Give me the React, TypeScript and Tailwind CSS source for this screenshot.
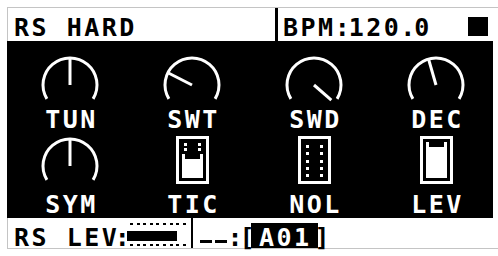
import React from 'react';

// knob: angle in degrees, 0 = straight up, positive = clockwise
const Knob = ({ angle, len = 27 }: { angle: number; len?: number }) => {
  const r = (angle * Math.PI) / 180;
  const x2 = 30 + len * Math.sin(r);
  const y2 = 30 - len * Math.cos(r);
  return (
    <svg width="60" height="48" viewBox="0 0 60 48">
      <path d="M6.9 43.9A27 27 0 1 1 53.1 43.9" fill="none" stroke="#fff" strokeWidth="3" />
      <line x1="30" y1="30" x2={x2} y2={y2} stroke="#fff" strokeWidth="3" />
    </svg>
  );
};

const Fader = ({ top, dots = [] }: { top?: number; dots?: number[] }) => (
  <svg width="33" height="48" viewBox="0 0 33 48" shapeRendering="crispEdges">
    <rect x="1.5" y="1.5" width="30" height="45" fill="none" stroke="#fff" strokeWidth="3" />
    {dots.map((y) => (
      <g key={y}>
        <rect x="8" y={y} width="3" height="3" fill="#fff" />
        <rect x="22" y={y} width="3" height="3" fill="#fff" />
      </g>
    ))}
    {top !== undefined && (
      <path d={`M6 ${top}H9V${top + 5}H24V${top}H27V42H6Z`} fill="#fff" />
    )}
  </svg>
);

const Label = ({ children, mt }: { children: string; mt: string }) => (
  <div className={`${mt} pl-[3px] text-white`}>{children}</div>
);

export default function App() {
  return (
    <div className="w-[498px] h-[256px] bg-white pl-[7px] pt-[7px] font-['DejaVu_Sans_Mono',monospace] font-bold text-[25px] leading-[23px] tracking-[2.5px] text-black">
      <div className="w-[491px] flex flex-col">
        {/* top bar */}
        <div className="flex h-[34px] border-t border-l border-[#c4c4c4]">
          <div className="w-[267px] pl-[6px] pt-[8px]">RS HARD</div>
          <div className="w-[3px] bg-black" />
          <div className="flex-1 flex items-start pl-[5px] pr-[10px]">
            <div className="flex pt-[8px]">
              <span>BPM</span>
              <span className="w-[13px] flex justify-center tracking-normal">:</span>
              <span>120</span>
              <span className="w-[13px] flex justify-center tracking-normal">.</span>
              <span>0</span>
            </div>
            <div className="ml-auto mt-[9px] w-[20px] h-[19px] bg-black" />
          </div>
        </div>

        {/* parameter page */}
        <div className="w-[486px] h-[177px] bg-black overflow-hidden flex flex-col">
          <div className="grid grid-cols-[repeat(4,122px)] pl-[2px] pt-[14px]">
            <div className="flex flex-col items-center">
              <Knob angle={0} />
              <Label mt="mt-[5px]">TUN</Label>
            </div>
            <div className="flex flex-col items-center">
              <Knob angle={-63} />
              <Label mt="mt-[5px]">SWT</Label>
            </div>
            <div className="flex flex-col items-center">
              <Knob angle={131} len={23} />
              <Label mt="mt-[5px]">SWD</Label>
            </div>
            <div className="flex flex-col items-center">
              <Knob angle={-16} />
              <Label mt="mt-[5px]">DEC</Label>
            </div>
          </div>
          <div className="grid grid-cols-[repeat(4,122px)] pl-[2px] pt-[5px]">
            <div className="flex flex-col items-center">
              <Knob angle={0} />
              <Label mt="mt-[9px]">SYM</Label>
            </div>
            <div className="flex flex-col items-center">
              <Fader top={18} dots={[7, 12]} />
              <Label mt="mt-[9px]">TIC</Label>
            </div>
            <div className="flex flex-col items-center">
              <Fader dots={[9, 16, 24, 31, 38]} />
              <Label mt="mt-[9px]">NOL</Label>
            </div>
            <div className="flex flex-col items-center">
              <Fader top={6} />
              <Label mt="mt-[9px]">LEV</Label>
            </div>
          </div>
        </div>

        {/* bottom bar */}
        <div className="flex h-[31px] border-l border-b border-[#c4c4c4]">
          <div className="w-[183px] flex items-start pl-[6px]">
            <span className="mt-[8px]">RS LEV</span>
            <span className="mt-[8px] w-[6px] flex justify-center tracking-normal">:</span>
            <svg className="mt-[4px] ml-[2px]" width="60" height="25" viewBox="0 0 60 25" shapeRendering="crispEdges">
              {Array.from({ length: 9 }).map((_, i) => (
                <rect key={`t${i}`} x={3 + i * 6.6} y="1" width="3" height="2" fill="#000" />
              ))}
              <rect x="0" y="9" width="50" height="10" fill="#000" />
              {Array.from({ length: 9 }).map((_, i) => (
                <rect key={`b${i}`} x={3 + i * 6.6} y="22" width="3" height="2" fill="#000" />
              ))}
            </svg>
          </div>
          <div className="w-[2px] bg-black" />
          <div className="flex items-start pl-[7px] tracking-normal">
            <div className="mt-[22px] w-[12px] h-[3px] bg-black" />
            <div className="mt-[22px] ml-[3px] w-[12px] h-[3px] bg-black" />
            <span className="mt-[8px] w-[16px] flex justify-center">:</span>
            <span className="mt-[8px] w-[8px] flex justify-center">[</span>
            <div className="mt-[5px] h-[25px] w-[67px] bg-black text-white pt-[3px] pl-[8px] tracking-[2.5px]">A01</div>
            <span className="mt-[8px] w-[8px] flex justify-center">]</span>
          </div>
        </div>
      </div>
    </div>
  );
}
